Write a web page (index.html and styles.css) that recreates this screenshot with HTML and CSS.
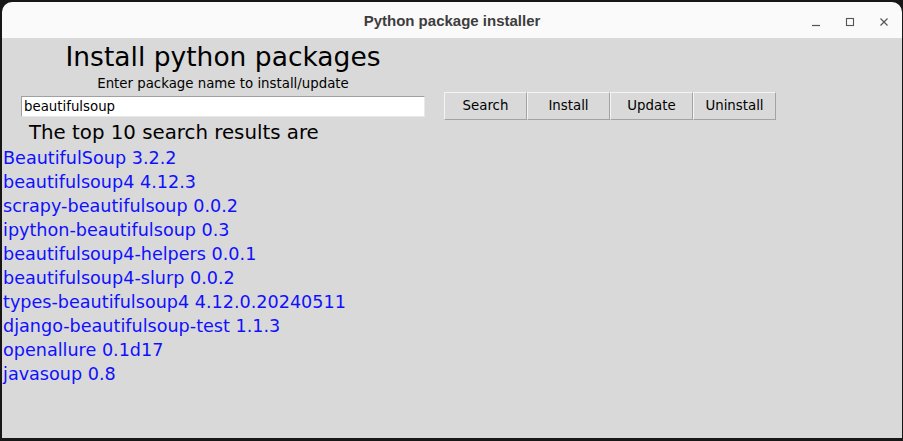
FILE: index.html
```html
<!DOCTYPE html>
<html>
<head>
<meta charset="utf-8">
<title>Python package installer</title>
<link rel="stylesheet" href="styles.css">
</head>
<body>
<div class="window">
  <header class="titlebar">
    <span class="spacer"></span>
    <span class="title">Python package installer</span>
    <div class="controls">
      <span class="ctl"><svg width="10" height="10" viewBox="0 0 10 10"><path d="M1 8.5H9" stroke="#555" stroke-width="1.2"/></svg></span>
      <span class="ctl"><svg width="10" height="10" viewBox="0 0 10 10"><rect x="1.5" y="1.5" width="7" height="7" fill="none" stroke="#555" stroke-width="1.1"/></svg></span>
      <span class="ctl"><svg width="10" height="10" viewBox="0 0 10 10"><path d="M1.5 1.5L8.5 8.5M8.5 1.5L1.5 8.5" stroke="#555" stroke-width="1.2"/></svg></span>
    </div>
  </header>
  <main class="content">
    <div class="form">
      <h1 class="heading">Install python packages</h1>
      <p class="hint">Enter package name to install/update</p>
      <div class="entry">beautifulsoup</div>
      <div class="buttons">
        <button class="btn">Search</button>
        <button class="btn">Install</button>
        <button class="btn">Update</button>
        <button class="btn">Uninstall</button>
      </div>
    </div>
    <h2 class="results-title">The top 10 search results are</h2>
    <ul class="results">
      <li>BeautifulSoup 3.2.2</li>
      <li>beautifulsoup4 4.12.3</li>
      <li>scrapy-beautifulsoup 0.0.2</li>
      <li>ipython-beautifulsoup 0.3</li>
      <li>beautifulsoup4-helpers 0.0.1</li>
      <li>beautifulsoup4-slurp 0.0.2</li>
      <li>types-beautifulsoup4 4.12.0.20240511</li>
      <li>django-beautifulsoup-test 1.1.3</li>
      <li>openallure 0.1d17</li>
      <li>javasoup 0.8</li>
    </ul>
  </main>
</div>
</body>
</html>
```
FILE: styles.css
```css
html, body {
  margin: 0;
  padding: 0;
  background: #171717;
  height: 441px;
  overflow: hidden;
}
.window {
  margin: 2px 1px 0 2px;
  height: 436px;
  display: flex;
  flex-direction: column;
  font-family: "DejaVu Sans", sans-serif;
}
.titlebar {
  height: 36px;
  background: #fafafa;
  border-radius: 10px 10px 0 0;
  display: grid;
  grid-template-columns: 1fr auto 1fr;
  align-items: center;
  flex: none;
}
.title {
  font-family: "Liberation Sans", sans-serif;
  font-weight: bold;
  font-size: 15px;
  color: #3d3d3d;
  padding-top: 1px;
}
.controls {
  justify-self: end;
  display: flex;
  padding-right: 1px;
}
.ctl {
  width: 34px;
  height: 36px;
  display: flex;
  align-items: center;
  justify-content: center;
  padding-top: 4px;
  box-sizing: border-box;
}
.content {
  flex: 1;
  background: #d9d9d9;
  color: #000;
}
.form {
  display: grid;
  grid-template-columns: 404px auto;
  column-gap: 19px;
  padding-left: 19px;
  padding-top: 3px;
}
.heading {
  grid-column: 1;
  margin: 0;
  font-weight: normal;
  font-size: 26.5px;
  line-height: 32px;
  height: 32px;
  text-align: center;
}
.hint {
  grid-column: 1;
  margin: 3px 0 0;
  font-size: 13.33px;
  line-height: 16px;
  text-align: center;
}
.entry {
  grid-column: 1;
  grid-row: 3;
  align-self: center;
  height: 21px;
  box-sizing: border-box;
  background: #fff;
  border: 1px solid #a0a0a0;
  border-right-color: #e8e8e8;
  border-bottom-color: #e8e8e8;
  font-size: 13.33px;
  line-height: 19px;
  padding-left: 2px;
}
.buttons {
  grid-column: 2;
  grid-row: 3;
  display: flex;
}
.btn {
  width: 83px;
  height: 28px;
  box-sizing: border-box;
  background: #d9d9d9;
  border: 1px solid;
  border-color: #f4f4f4 #a3a3a3 #a3a3a3 #f4f4f4;
  font-family: "DejaVu Sans", sans-serif;
  font-size: 13.33px;
  color: #000;
  padding: 0 0 2px;
  margin: 0;
}
.results-title {
  margin: 1px 0 0;
  padding-left: 27px;
  font-weight: normal;
  font-size: 19.8px;
  line-height: 24px;
}
.results {
  list-style: none;
  margin: 1px 0 0;
  padding: 0 0 0 1px;
  color: #1010ff;
  font-size: 17.6px;
  line-height: 24px;
}
```
